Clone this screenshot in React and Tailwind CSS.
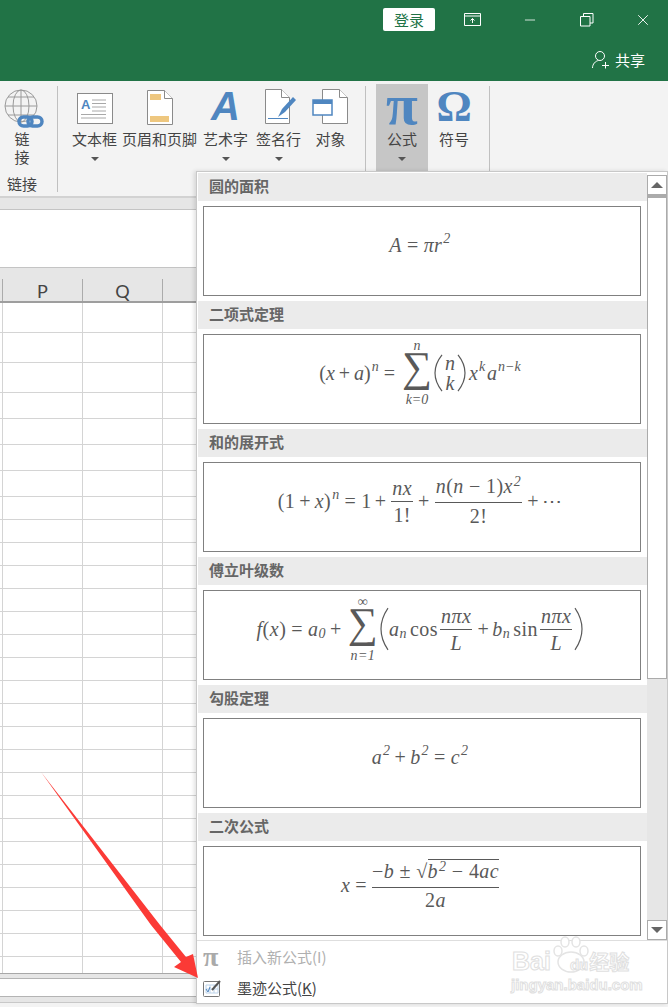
import { X, Minus } from 'lucide-react';

const cjk = { fontFamily: '"Noto Sans CJK SC", "Liberation Sans", sans-serif' };

const rows = [
  'h-[30px]', 'h-[30px]', 'h-[30px]',
  'h-[26px]', 'h-[26px]', 'h-[26px]', 'h-[26px]',
  ...Array(20).fill('h-[23px]'),
];

function I({ children }) {
  return <span className="italic">{children}</span>;
}

function Sup({ children }) {
  return <span className="text-[14px] italic relative -top-[7px] ml-px">{children}</span>;
}

function Sub({ children }) {
  return <span className="text-[14px] italic relative top-[4px]">{children}</span>;
}

function Frac({ top, bottom }) {
  return (
    <span className="inline-flex flex-col items-center mx-[2px]">
      <span className="px-[1px] border-b border-[#595959] leading-[26px] whitespace-nowrap">{top}</span>
      <span className="leading-[26px] whitespace-nowrap">{bottom}</span>
    </span>
  );
}

function Sum({ top, bottom }) {
  return (
    <span className="inline-flex flex-col items-center mx-[2px] w-[30px]">
      <span className="text-[14px] italic leading-[13px] h-[14px]">{top}</span>
      <span className="text-[42px] leading-[38px] h-[38px] relative -top-[5px]">∑</span>
      <span className="text-[14px] italic leading-[14px] h-[14px] mt-[2px]">{bottom}</span>
    </span>
  );
}

function Paren({ right, h }) {
  return (
    <svg width="9" height={h} viewBox="0 0 9 40" preserveAspectRatio="none" className={right ? '-scale-x-100' : ''}>
      <path d="M8 1C2 9 1 15 1 20s1 11 7 19" fill="none" stroke="#595959" strokeWidth="1.2" />
    </svg>
  );
}

const formulas = [
  {
    title: '圆的面积',
    tracking: 'tracking-[0.4px]',
    body: <><I>A</I><span className="mx-[5px]">=</span><I>πr</I><Sup>2</Sup></>,
  },
  {
    title: '二项式定理',
    tracking: 'tracking-normal',
    body: (
      <>
        (<I>x</I><span className="mx-[4px]">+</span><I>a</I>)<Sup>n</Sup>
        <span className="mx-[5px]">=</span>
        <Sum top="n" bottom="k=0" />
        <Paren h={38} />
        <span className="inline-flex flex-col items-center italic leading-[20px] w-[14px]"><span>n</span><span>k</span></span>
        <Paren right h={38} />
        <span className="ml-[3px]"><I>x</I></span><Sup>k</Sup><span className="ml-[2px]"><I>a</I></span><Sup>n−k</Sup>
      </>
    ),
  },
  {
    title: '和的展开式',
    tracking: 'tracking-[0.4px]',
    body: (
      <>
        (1<span className="mx-[4px]">+</span><I>x</I>)<Sup>n</Sup>
        <span className="mx-[5px]">=</span>1<span className="mx-[3px]">+</span>
        <Frac top={<I>nx</I>} bottom="1!" />
        <span className="mx-[3px]">+</span>
        <Frac top={<><I>n</I>(<I>n</I> − 1)<I>x</I><Sup>2</Sup></>} bottom="2!" />
        <span className="mx-[3px]">+</span>⋯
      </>
    ),
  },
  {
    title: '傅立叶级数',
    tracking: 'tracking-[0.5px]',
    body: (
      <>
        <I>f</I>(<I>x</I>)<span className="mx-[5px]">=</span><I>a</I><Sub>0</Sub>
        <span className="mx-[4px]">+</span>
        <Sum top="∞" bottom="n=1" />
        <Paren h={44} />
        <I>a</I><Sub>n</Sub><span className="ml-[3px]">cos</span>
        <Frac top={<I>nπx</I>} bottom={<I>L</I>} />
        <span className="mx-[3px]">+</span>
        <I>b</I><Sub>n</Sub><span className="ml-[3px]">sin</span>
        <Frac top={<I>nπx</I>} bottom={<I>L</I>} />
        <Paren right h={44} />
      </>
    ),
  },
  {
    title: '勾股定理',
    tracking: 'tracking-[0.4px]',
    body: <><I>a</I><Sup>2</Sup><span className="mx-[4px]">+</span><I>b</I><Sup>2</Sup><span className="mx-[5px]">=</span><I>c</I><Sup>2</Sup></>,
  },
  {
    title: '二次公式',
    tracking: 'tracking-[0.4px]',
    body: (
      <>
        <I>x</I><span className="mx-[5px]">=</span>
        <span className="inline-flex flex-col items-center">
          <span className="border-b border-[#595959] leading-[26px] whitespace-nowrap">
            −<I>b</I> ± √<span className="border-t border-[#595959]"><I>b</I><Sup>2</Sup> − 4<I>ac</I></span>
          </span>
          <span className="leading-[24px]">2<I>a</I></span>
        </span>
      </>
    ),
  },
];

function RibbonButton({ label, icon, caret, wide, active }) {
  return (
    <div className={`flex flex-col items-center shrink-0 h-[87px] ${wide} ${active ? 'bg-[#c6c6c6]' : ''}`}>
      <div className="h-[43px] flex items-end justify-center pb-[2px]">{icon}</div>
      <span className="text-[15px] leading-[18px] mt-[3px] whitespace-nowrap text-[#444]">{label}</span>
      {caret && <span className="mt-[9px] w-0 h-0 border-x-[4px] border-x-transparent border-t-[4px] border-t-[#555]" />}
    </div>
  );
}

function Ribbon() {
  return (
    <div className="h-[117px] shrink-0 bg-[#f3f3f3] border-b-2 border-[#d2d2d2] flex pt-[3px]">
      <div className="w-[57px] shrink-0 flex flex-col items-center text-[15px] text-[#444] leading-[18px] pr-[14px]">
        <svg width="40" height="41" viewBox="0 0 40 41" className="mt-[5px] ml-[4px] shrink-0">
          <g fill="none" stroke="#9a9a9a">
            <circle cx="17" cy="17" r="16" />
            <ellipse cx="17" cy="17" rx="8" ry="16" />
            <path d="M17 1v32M1 17h32M4 8h26M4 26h26" />
          </g>
          <g fill="none" stroke="#4f86c0" strokeWidth="3.5">
            <rect x="15" y="28" width="13" height="9" rx="4.5" />
            <rect x="24" y="28" width="14" height="9" rx="4.5" />
          </g>
        </svg>
        <span className="ml-[1px]">链</span>
        <span className="ml-[1px]">接</span>
        <span className="mt-[9px] ml-[1px]">链接</span>
      </div>
      <div className="w-px h-[106px] mt-[2px] bg-[#c0c0c0] shrink-0" />
      <div className="w-[9px] shrink-0" />
      <RibbonButton
        wide="w-[55px]"
        label="文本框"
        caret
        icon={
          <svg width="36" height="32" viewBox="0 0 36 32">
            <rect x=".5" y=".5" width="35" height="30" fill="#fff" stroke="#8a8a8a" />
            <text x="4" y="16" fontSize="13" fontWeight="700" fill="#4f86c0" fontFamily="Liberation Sans">A</text>
            <path d="M15 7h14M15 10.500h14M15 14h14M15 18h14M4 21.500h25M4 25h25" stroke="#a8a8a8" />
          </svg>
        }
      />
      <RibbonButton
        wide="w-[75px]"
        label="页眉和页脚"
        icon={
          <svg width="26" height="35" viewBox="0 0 26 35">
            <path d="M.5.500h17l8 8v26H.5z" fill="#fff" stroke="#8a8a8a" />
            <path d="M17.500.500v8h8" fill="#fff" stroke="#8a8a8a" />
            <rect x="3" y="4" width="11" height="6" fill="#eec77f" />
            <rect x="3" y="26" width="19" height="6" fill="#eec77f" />
          </svg>
        }
      />
      <RibbonButton
        wide="w-[57px]"
        label="艺术字"
        caret
        icon={<span className="text-[40px] leading-[36px] font-bold italic text-[#4f86c0] mb-[1px]" style={{ fontFamily: '"Liberation Sans", sans-serif' }}>A</span>}
      />
      <RibbonButton
        wide="w-[49px]"
        label="签名行"
        caret
        icon={
          <svg width="34" height="36" viewBox="0 0 34 36" className="ml-[5px]">
            <path d="M1.500.500h16l8 8v26h-24z" fill="#fff" stroke="#8a8a8a" />
            <path d="M17.500.500v8h8" fill="#fff" stroke="#8a8a8a" />
            <path d="M14 28l4-8L29 8l3 3-11 12z" fill="#4f86c0" />
            <path d="M4 29.500h20" stroke="#4f86c0" />
          </svg>
        }
      />
      <RibbonButton
        wide="w-[55px]"
        label="对象"
        icon={
          <svg width="36" height="36" viewBox="0 0 36 36" className="-ml-[1px]">
            <path d="M10.500.500h17l8 8v26h-25z" fill="#fff" stroke="#8a8a8a" />
            <path d="M27.500.500v8h8" fill="#fff" stroke="#8a8a8a" />
            <rect x="1" y="11" width="19" height="15" fill="#fff" stroke="#4f86c0" strokeWidth="1.500" />
            <rect x="1" y="11" width="19" height="4" fill="#4f86c0" />
          </svg>
        }
      />
      <div className="w-[7px] shrink-0" />
      <div className="w-px h-[85px] mt-[2px] bg-[#c0c0c0] shrink-0" />
      <div className="w-[10px] shrink-0" />
      <RibbonButton
        wide="w-[52px]"
        label="公式"
        caret
        active
        icon={<span className="text-[58px] leading-[40px] font-bold text-[#4f86c0]" style={{ fontFamily: '"Liberation Serif", serif' }}>π</span>}
      />
      <RibbonButton
        wide="w-[52px]"
        label="符号"
        icon={<span className="text-[44px] leading-[40px] font-bold text-[#4f86c0] -mb-[2px]" style={{ fontFamily: '"Liberation Serif", serif' }}>Ω</span>}
      />
      <div className="w-px h-[85px] mt-[2px] ml-[9px] bg-[#c0c0c0] shrink-0" />
    </div>
  );
}

function TitleBar() {
  return (
    <div className="h-[81px] shrink-0 bg-[#217346] text-white flex flex-col">
      <div className="h-[39px] flex items-start justify-end pt-[8px]">
        <div className="w-[52px] h-[23px] bg-white rounded-[2px] text-[#217346] text-[15px] flex items-center justify-center leading-none">登录</div>
        <div className="w-[58px] ml-[8px] flex justify-center pt-[5px]">
          <svg width="17" height="13" viewBox="0 0 17 13" fill="none" stroke="#fff">
            <path d="M.5.500h16v12H.5zM.5 3h16M8.500 10V5.500M6.500 7.500l2-2 2 2" />
          </svg>
        </div>
        <div className="w-[58px] flex justify-center pt-[4px]"><Minus size={16} strokeWidth={1.200} /></div>
        <div className="w-[56px] flex justify-center pt-[5px]">
          <svg width="14" height="14" viewBox="0 0 14 14" fill="none" stroke="#fff">
            <path d="M.5 3.500h9.500v9.500H.5zM3.500 3.500v-3H13v9.500h-3" />
          </svg>
        </div>
        <div className="w-[53px] flex justify-center pt-[3px] pl-[3px]"><X size={18} strokeWidth={1.200} /></div>
      </div>
      <div className="flex justify-end items-center h-[42px] pr-[23px] pb-[1px] gap-[4px]">
        <svg width="19" height="19" viewBox="0 0 19 19" fill="none" stroke="#fff">
          <circle cx="8" cy="6" r="4.500" />
          <path d="M.5 18c0-4 3-7 6-7.500M13.500 12v6.500M10 15.500h7" />
        </svg>
        <span className="text-[15px] leading-none">共享</span>
      </div>
    </div>
  );
}

function Sheet() {
  return (
    <div className="flex-1 flex flex-col min-h-0">
      <div className="h-[12px] bg-[#e6e6e6] border-b border-[#c4c4c4] shrink-0" />
      <div className="h-[58px] bg-white border-b border-[#c4c4c4] shrink-0" />
      <div className="h-[35px] shrink-0 bg-[#e6e6e6] border-b-2 border-[#9e9e9e] flex text-[18px] text-[#444]" style={{ fontFamily: 'Lato, "Liberation Sans", sans-serif' }}>
        <div className="w-[3px] h-[22px] mt-[11px] border-r border-[#ababab]" />
        <div className="w-[80px] h-[22px] mt-[11px] border-r border-[#ababab] text-center leading-[24px]">P</div>
        <div className="w-[80px] h-[22px] mt-[11px] border-r border-[#ababab] text-center leading-[24px]">Q</div>
      </div>
      <div className="bg-white shrink-0">
        {rows.map((row, i) => (
          <div key={i} className={`flex border-b border-[#d4d4d4] ${row}`}>
            <div className="w-[3px] border-r border-[#d4d4d4]" />
            <div className="w-[80px] border-r border-[#d4d4d4]" />
            <div className="w-[80px] border-r border-[#d4d4d4]" />
          </div>
        ))}
        <div className="flex h-[16px]">
          <div className="w-[3px] border-r border-[#d4d4d4]" />
          <div className="w-[80px] border-r border-[#d4d4d4]" />
          <div className="w-[80px] border-r border-[#d4d4d4]" />
        </div>
      </div>
      <div className="h-[5px] shrink-0 bg-[#e6e6e6] border-t border-[#a8a8a8]" />
      <div className="h-[19px] shrink-0 bg-white border-y border-[#b4b4b4]" />
      <div className="h-[6px] shrink-0 bg-[#e6e6e6] border-b border-[#c8c8c8]" />
      <div className="flex-1 bg-[#f3f3f3]" />
    </div>
  );
}

function FormulaGallery() {
  return (
    <div className="absolute left-[196px] top-[171px] w-[472px] h-[833px] bg-white border border-[#c8c8c8] shadow-[-2px_0_4px_rgba(0,0,0,0.12)] flex flex-col">
      <div className="flex flex-1 min-h-0">
        <div className="w-[450px] pt-[1px] pl-px shrink-0 overflow-hidden">
          {formulas.map((f) => (
            <div key={f.title} className="mb-[5px]">
              <div className="h-[28px] bg-[#ebebeb] pl-[11px] pb-[4px] flex items-center text-[15px] leading-none font-bold text-[#666]" style={cjk}>{f.title}</div>
              <div
                className={`mt-[5px] ml-[5px] w-[438px] h-[90px] border border-[#808080] flex items-center justify-center pb-[12px] pr-[4px] text-[20px] text-[#595959] whitespace-nowrap ${f.tracking}`}
                style={{ fontFamily: '"Liberation Serif", serif' }}
              >
                {f.body}
              </div>
            </div>
          ))}
        </div>
        <div className="w-[20px] flex flex-col pt-[3px]">
          <div className="h-[20px] border border-[#ababab] flex items-center justify-center shrink-0">
            <span className="w-0 h-0 border-x-[6px] border-x-transparent border-b-[6px] border-b-[#666]" />
          </div>
          <div className="h-[484px] border border-t-[3px] border-[#ababab] shrink-0 bg-white" />
          <div className="h-[241px] bg-[#e6e6e6] shrink-0" />
          <div className="h-[20px] border border-[#ababab] bg-white flex items-center justify-center shrink-0">
            <span className="w-0 h-0 border-x-[6px] border-x-transparent border-t-[6px] border-t-[#666]" />
          </div>
        </div>
      </div>
      <div className="h-[63px] shrink-0 border-t border-[#dedede] flex flex-col text-[15px]" style={cjk}>
        <div className="flex items-center h-[32px]">
          <span className="w-[40px] pl-[6px] text-[28px] leading-none font-bold text-[#aaa]" style={{ fontFamily: '"Liberation Serif", serif' }}>π</span>
          <span className="text-[#b0b0b0]">插入新公式(I)</span>
        </div>
        <div className="flex items-center h-[29px] pt-[2px]">
          <span className="w-[40px] pl-[6px]">
            <svg width="19" height="19" viewBox="0 0 19 19">
              <rect x=".5" y="2.500" width="16" height="15" rx="1" fill="#fff" stroke="#777" />
              <path d="M3 6h12v8H3zM3 10h12M7 6v8M11 6v8" fill="none" stroke="#bcd3ea" />
              <path d="M3 10l2 3 2-5" fill="none" stroke="#4f86c0" />
              <path d="M9 11L17 2" stroke="#555" strokeWidth="2" />
            </svg>
          </span>
          <span className="text-[#444]">墨迹公式(<span className="underline">K</span>)</span>
        </div>
      </div>
    </div>
  );
}

function Watermark() {
  return (
    <div className="absolute left-[510px] top-[934px] w-[125px] h-[62px] pointer-events-none">
      <svg width="38" height="38" viewBox="0 0 38 38" className="absolute left-[42px] top-[2px]" fill="#fff" stroke="#e4e4e4" strokeWidth="1.500">
        <ellipse cx="6" cy="15" rx="4" ry="5" />
        <ellipse cx="13" cy="6" rx="4" ry="5" />
        <ellipse cx="24" cy="6" rx="4" ry="5" />
        <ellipse cx="32" cy="15" rx="4" ry="5" />
        <ellipse cx="19" cy="26" rx="13" ry="10" />
      </svg>
      <div className="absolute left-[2px] top-[12px] text-[25px] font-bold leading-[30px] text-white [-webkit-text-stroke:1px_#e0e0e0] whitespace-nowrap flex items-baseline" style={{ fontFamily: '"Liberation Sans", sans-serif' }}>
        <span>Bai</span>
        <span className="text-[15px] ml-[19px]">du</span>
        <span className="text-[20px] ml-[1px]" style={cjk}>经验</span>
      </div>
      <div className="absolute left-[1px] top-[43px] text-[15px] font-bold leading-[16px] text-white [-webkit-text-stroke:1px_#e0e0e0] whitespace-nowrap" style={{ fontFamily: '"Liberation Sans", sans-serif' }}>
        jingyan.baidu.com
      </div>
    </div>
  );
}

export default function App() {
  return (
    <div className="relative w-[668px] h-[1007px] overflow-hidden flex flex-col bg-white" style={cjk}>
      <TitleBar />
      <Ribbon />
      <Sheet />
      <FormulaGallery />
      <Watermark />
      <svg className="absolute left-0 top-0 pointer-events-none" width="668" height="1007">
        <polygon points="41,772 160,925 186,957 193,954 198,978 174,967 181,962 151,925" fill="#fb3a36" />
      </svg>
    </div>
  );
}
